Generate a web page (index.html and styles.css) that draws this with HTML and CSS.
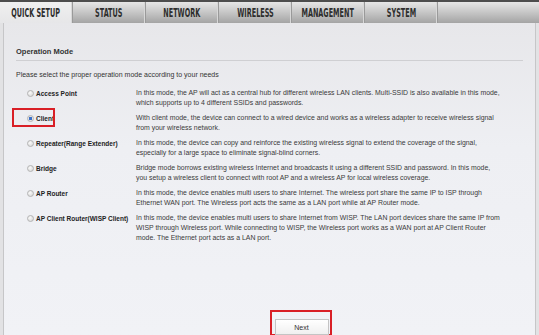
FILE: index.html
```html
<html>
<head>
<meta http-equiv="Content-Type" content="text/html; charset=utf-8" />
<title>Quick Setup</title>
<link rel="stylesheet" href="styles.css">
</head>
<body>
<nav class="tabs">
	<a class="tab active"><span>QUICK SETUP</span></a>
	<a class="tab"><span>STATUS</span></a>
	<a class="tab"><span>NETWORK</span></a>
	<a class="tab"><span>WIRELESS</span></a>
	<a class="tab"><span>MANAGEMENT</span></a>
	<a class="tab"><span>SYSTEM</span></a>
</nav>
<section class="panel">
	<h2 class="section-title">Operation Mode</h2>
	<p class="intro">Please select the proper operation mode according to your needs</p>
	<div class="modes">
		<div class="mode">
			<label class="mode-pick"><span class="radio"></span>Access Point</label>
			<div class="mode-desc">In this mode, the AP will act as a central hub for different wireless LAN clients. Multi-SSID is also available in this mode,<br>which supports up to 4 different SSIDs and passwords.</div>
		</div>
		<div class="mode">
			<label class="mode-pick marked"><span class="radio checked"></span>Client</label>
			<div class="mode-desc">With client mode, the device can connect to a wired device and works as a wireless adapter to receive wireless signal<br>from your wireless network.</div>
		</div>
		<div class="mode">
			<label class="mode-pick"><span class="radio"></span>Repeater(Range Extender)</label>
			<div class="mode-desc">In this mode, the device can copy and reinforce the existing wireless signal to extend the coverage of the signal,<br>especially for a large space to eliminate signal-blind corners.</div>
		</div>
		<div class="mode">
			<label class="mode-pick"><span class="radio"></span>Bridge</label>
			<div class="mode-desc">Bridge mode borrows existing wireless Internet and broadcasts it using a different SSID and password. In this mode,<br>you setup a wireless client to connect with root AP and a wireless AP for local wireless coverage.</div>
		</div>
		<div class="mode">
			<label class="mode-pick"><span class="radio"></span>AP Router</label>
			<div class="mode-desc">In this mode, the device enables multi users to share Internet. The wireless port share the same IP to ISP through<br>Ethernet WAN port. The Wireless port acts the same as a LAN port while at AP Router mode.</div>
		</div>
		<div class="mode">
			<label class="mode-pick"><span class="radio"></span>AP Client Router(WISP Client)</label>
			<div class="mode-desc">In this mode, the device enables multi users to share Internet from WISP. The LAN port devices share the same IP from<br>WISP through Wireless port. While connecting to WISP, the Wireless port works as a WAN port at AP Client Router<br>mode. The Ethernet port acts as a LAN port.</div>
		</div>
	</div>
	<div class="actions">
		<div class="marked-box">
			<button class="btn">Next</button>
		</div>
	</div>
</section>
</body>
</html>
```

FILE: styles.css
```css
body{
	margin:0;
	height:335px;
	overflow:hidden;
	background:#e2e2e4;
	font-family:"Liberation Sans", Arial, sans-serif;
	color:#333;
}
.tabs{
	display:flex;
	height:21px;
	border-top:2px solid #4d4d4d;
	background:linear-gradient(#e6e6e6, #c9c9c9 45%, #a4a4a4);
}
.tab{
	display:flex;
	align-items:center;
	justify-content:center;
	width:72px;
	border-right:1px solid #9a9a9a;
	box-shadow:inset -1px 0 0 #d8d8d8;
	font-family:"DejaVu Sans Condensed", "DejaVu Sans", sans-serif;
	font-weight:bold;
	font-size:12px;
	color:#2e2e2e;
	white-space:nowrap;
	cursor:pointer;
}
.tab span{
	display:inline-block;
	transform:scaleX(0.6);
}
.tab.active{
	background:linear-gradient(#f0f0f0, #e6e6e8);
}
.panel{
	height:312px;
	margin:0 3px;
	padding:24px 12px 0 12px;
	box-sizing:border-box;
	border-left:1px solid #c6c6c8;
	border-right:1px solid #c6c6c8;
	background:linear-gradient(#e7e7ea, #eeeff3 40%, #f1f2f6);
}
.section-title{
	margin:0;
	padding:0 0 3px 0;
	font-size:7.5px;
	font-weight:bold;
	line-height:10px;
	color:#333;
	border-bottom:1px solid #cfcfd2;
}
.intro{
	margin:9px 0 0 0;
	font-size:7px;
	line-height:10px;
	color:#333;
}
.modes{
	margin-top:8px;
}
.mode{
	display:flex;
	margin-bottom:5px;
}
.mode-pick{
	position:relative;
	display:flex;
	align-items:center;
	align-self:flex-start;
	width:109px;
	height:10px;
	padding-left:11px;
	font-size:6.5px;
	font-weight:bold;
	color:#222;
	white-space:nowrap;
}
.mode-pick.marked::after{
	content:'';
	position:absolute;
	left:-4px;
	top:-5px;
	width:43px;
	height:19px;
	border:2px solid #d91f26;
	box-sizing:border-box;
}
.radio{
	display:inline-block;
	width:7px;
	height:7px;
	margin-right:2px;
	border-radius:50%;
	border:1px solid #b4b4b4;
	box-sizing:border-box;
	background:radial-gradient(circle at 40% 35%, #fafafa, #d2d2d2);
}
.radio.checked{
	background:radial-gradient(circle, #3a6fc8 0, #3a6fc8 1.4px, #e4e4e4 2px);
}
.mode-desc{
	font-size:6.9px;
	line-height:10px;
	color:#3a3a3a;
	white-space:nowrap;
}
.actions{
	display:flex;
	justify-content:center;
	margin-top:67px;
	padding-left:62px;
}
.marked-box{
	width:62px;
	height:26px;
	padding:7px 1px 0 3px;
	box-sizing:border-box;
	border:2px solid #d91f26;
}
.btn{
	display:block;
	width:54px;
	height:16px;
	padding:0;
	border:1px solid #c4c4c4;
	background:linear-gradient(#ffffff, #f0f0f0);
	font-family:"Liberation Sans", Arial, sans-serif;
	font-size:7px;
	color:#333;
	cursor:pointer;
}
```
